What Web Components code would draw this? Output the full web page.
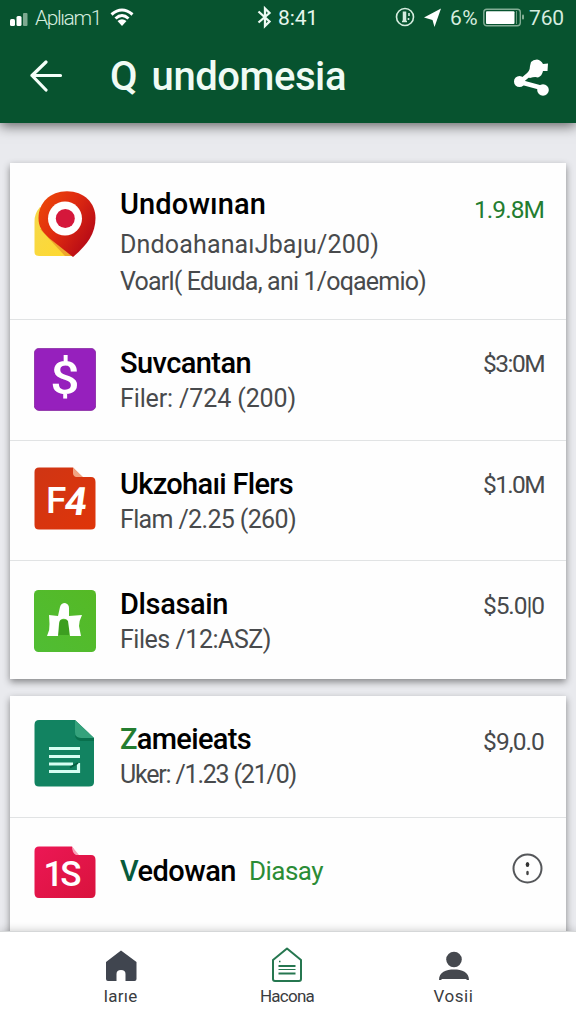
<!DOCTYPE html>
<html lang="en">
<head>
<meta charset="utf-8">
<title>Undomesia</title>
<style>
html,body{margin:0;height:100%;overflow:hidden;background:#e9eaee}
body{font-family:Roboto,"Liberation Sans",sans-serif;color:#000}
</style>
</head>
<body>
<phone-app></phone-app>
<script>
const define = (name, html, ready) => customElements.define(name, class extends HTMLElement {
  connectedCallback() {
    if (!this.shadowRoot) this.attachShadow({mode: 'open'}).innerHTML = html;
    if (ready) ready.call(this, this.shadowRoot);
  }
});

// One line of text tracked so that it fills the width given in its attribute.
define('fit-text', `<style>:host{display:block;white-space:pre;flex:none}span{display:inline-block}</style><span><slot></slot></span>`, function (root) {
  const span = root.querySelector('span');
  const want = +this.getAttribute('width');
  const n = [...this.textContent].length;
  const gap = (want - span.getBoundingClientRect().width) / n;
  span.style.letterSpacing = gap.toFixed(3) + 'px';
  this.style.width = want + 'px';
});

define('status-bar', `<style>
:host{display:flex;align-items:center;height:36px;box-sizing:border-box;padding-left:10px;color:#d5ecdf;font-size:21px;line-height:36px}
svg{display:block;flex:none}
.a{margin-left:7px;font-weight:300}.w{margin-left:9px}.b{margin-left:123px}.t{margin-left:6px;color:#e6f6ed}
.o{margin-left:77px}.l{margin-left:9px}.p{margin-left:8px}.bt{margin-left:5px}.n{margin-left:5px}
</style>
<svg width="18" height="36"><rect x="0" y="19" width="5" height="7" rx="1.5" fill="#fff"/><rect x="6.500" y="16" width="5" height="10" rx="1.500" fill="#fff"/><rect x="13" y="13" width="4.500" height="13" rx="1" fill="#7da990"/></svg>
<fit-text class="a" width="66">Aplıam1</fit-text>
<svg class="w" width="24" height="36" fill="none" stroke="#fff" stroke-width="3"><path d="M1.500 14.500Q12 5.500 22.500 14.500M5.500 18.500Q12 12.500 18.500 18.500" /><path d="M7.500 21Q12 17.500 16.500 21L12 26Z" fill="#fff" stroke="none"/></svg>
<svg class="b" width="15" height="36" fill="none" stroke="#eefaf3" stroke-width="2.300"><path d="M1.500 11.500L12.500 21.500L8 26V8.500L12.500 13L1.500 22.500"/></svg>
<fit-text class="t" width="40">8:41</fit-text>
<svg class="o" width="20" height="36" fill="none" stroke="#d5ecdf" stroke-width="1.600"><circle cx="10" cy="17" r="8.500"/><path d="M9.500 11.500V22" stroke-width="3.500"/><path d="M7 21.500H12M14 13V16M13.500 18V20"/></svg>
<svg class="l" width="18" height="36"><path d="M17 8.500L10.500 27L8.500 20L0 17.500Z" fill="#fff"/></svg>
<fit-text class="p" width="28">6%</fit-text>
<svg class="bt" width="41" height="36"><rect x=".8" y="9.300" width="36.500" height="16.500" rx="3" fill="none" stroke="#83ad95" stroke-width="1.400"/><rect x="3" y="11.300" width="28.500" height="12.700" rx="1" fill="#fff"/><path d="M33.500 11V24" stroke="#6d9b80"/><rect x="39" y="14.500" width="2" height="5" rx="1" fill="#83ad95"/></svg>
<fit-text class="n" width="35">760</fit-text>`);

define('top-bar', `<style>
:host{display:block;height:123px;box-sizing:border-box;background:#07532f;position:relative;z-index:1;box-shadow:0 3px 12px rgba(0,0,0,.58)}
.m{display:flex;align-items:center;height:82px;padding-left:29px}
svg{display:block;flex:none}fit-text{margin-left:47px;font-size:40px;font-weight:500;color:#f0fbf5;line-height:80px;word-spacing:5px}
.s{margin-left:166px}
</style><status-bar></status-bar>
<div class="m">
<svg width="34" height="34" fill="none" stroke="#f4fff9" stroke-width="3.200" stroke-linecap="round" stroke-linejoin="round"><path d="M31.500 15.500H3M17 2L3 15.500L17 30"/></svg>
<fit-text width="236">Q undomesia</fit-text>
<svg class="s" width="38" height="42" fill="#fff"><path d="M21 15L8 26L30 32" fill="none" stroke="#fff" stroke-width="4.500" stroke-linejoin="round"/><circle cx="7.500" cy="25.500" r="5.500"/><circle cx="31" cy="34" r="5.800"/><path d="M19 6Q21 3.500 25 3.500Q29 4 31 8L36 7.500L35.500 15L31 15Q30 20 26 21.500Q23 20.500 18 22L13 20Q18 15 18 10Z"/></svg>
</div>`);

const icons = {
pin: `<svg width="62" height="68"><defs><linearGradient id="r" x1="0" y1="0" x2="1" y2=".7"><stop offset="0" stop-color="#ee4b08"/><stop offset=".5" stop-color="#df2b10"/><stop offset="1" stop-color="#b40817"/></linearGradient><linearGradient id="y" x2="1" y2="1"><stop stop-color="#f5d84c"/><stop offset="1" stop-color="#ffd92d"/></linearGradient></defs><path d="M6 16Q0 23 .5 31V61Q.5 65 5 65H39V45Z" fill="url(#y)"/><path d="M6 38L31 65H39L15 38Z" fill="#eda72c"/><path d="M33 .3C16 .3 4.500 12 4.500 27C4.500 36 8 40 15 47L39 66C53 54 61.500 43 61.500 27C61.500 12 50 .3 33 .3Z" fill="url(#r)"/><circle cx="31" cy="27.500" r="17" fill="#fff"/><circle cx="31.300" cy="27.500" r="9.500" fill="#d5173b"/></svg>`,
dollar: `<svg width="62" height="63"><rect x=".4" y=".4" width="61.200" height="62" rx="4.500" fill="#9620bd" stroke="#81219d" stroke-width=".8"/><text transform="translate(31 46) scale(1.120 1)" text-anchor="middle" font-size="46" font-weight="500" fill="#fff">$</text></svg>`,
f4: `<svg width="62" height="64"><defs><linearGradient id="o" y2="1"><stop stop-color="#cf3514"/><stop offset="1" stop-color="#df3509"/></linearGradient></defs><path d="M5 .5H39L48 10H57Q61.500 10 61.500 15V58Q61.500 62.500 57 62.500H5Q.5 62.500 .5 58V5Q.5 .5 5 .5Z" fill="url(#o)"/><path d="M39 .5L49 10H42Q39 9 39 6Z" fill="#f1a482"/><text x="12" y="45.500" font-size="37" font-weight="500" fill="#fff">F</text><text transform="translate(29 48) skewX(-8)" font-size="39" font-weight="700" fill="#fff">4</text></svg>`,
castle: `<svg width="62" height="63"><defs><linearGradient id="g" x1="1" x2="0" y2="1"><stop stop-color="#55b925"/><stop offset="1" stop-color="#50bd34"/></linearGradient></defs><rect width="62" height="62" rx="4.500" fill="url(#g)"/><path d="M26 30H35V45H24Z" fill="#3d9e20"/><path d="M15 25L24 26L26 17Q27 13 31 13Q35 14 35 18V26L48 25Q45 31 45 36L47 46H36L34 31Q32 28 28 29Q25 30 25 34L24 46H13Q16 40 15.500 34Z" fill="#fff"/></svg>`,
sheet: `<svg width="62" height="68"><path d="M5 0H41L60 18V62Q60 66.500 55 66.500H5Q.5 66.500 .5 62V5Q.5 0 5 0Z" fill="#128361"/><path d="M41 0L60 18H47Q41 18 41 12Z" fill="#35a27c"/><path d="M41 15Q43 18 47 18H60V21H46Q41 19 41 15Z" fill="#08704d"/><path d="M15 28.500H46M15 36.500H46M15 44H39M15 51.500H46M44.500 43V53" stroke="#d6fff2" stroke-width="3.200" fill="none"/><path d="M36 47.500L44 43" stroke="#075f42" stroke-width="2"/></svg>`,
folder: `<svg width="62" height="54"><defs><linearGradient id="k" x2="1" y2="1"><stop stop-color="#ec1755"/><stop offset="1" stop-color="#d9133d"/></linearGradient></defs><path d="M5 .5H38L43 9H57Q61.500 9 61.500 14V47Q61.500 52 57 52H5Q.5 52 .5 47V5Q.5 .5 5 .5Z" fill="url(#k)"/><path d="M38 .5L45 9H42Q38 7 38 .5Z" fill="#f7a0b7"/><text x="9.500" y="40" font-size="35" font-weight="500" fill="#fff" textLength="38">1S</text></svg>`
};

define('file-row', `<style>
:host{display:flex;box-sizing:border-box;padding-left:24px;padding-right:22px;align-items:flex-start;border-bottom:1px solid #e1e3e4}
:host(:last-child){border-bottom:0}
.ic{width:62px;flex:none;margin-top:var(--icon)}svg{display:block}.ic text{font-family:Roboto,sans-serif}
.tx{margin-left:24px;margin-top:var(--title,26px);flex:1;min-width:0}
.h{display:flex;font-size:29px;line-height:34px;font-weight:500;height:34px}
.s{font-size:25px;line-height:37px;color:#484a4c;margin-top:var(--gap,0px)}
.pr{margin-top:var(--price,26px);font-size:24.5px;line-height:36px;color:#47494b}
</style><div class="ic"></div><div class="tx"><div class="h"><slot></slot></div><div class="s"><slot name="sub"></slot></div></div><div class="pr"><slot name="end"></slot></div>`,
function (root) { root.querySelector('.ic').innerHTML = icons[this.getAttribute('icon')]; });

define('file-card', `<style>:host{display:block;background:#fefefe;box-shadow:0 3px 7px rgba(0,0,0,.43)}</style><slot></slot>`);

define('nav-item', `<style>:host{display:flex;flex-direction:column;align-items:center;font-size:17px;line-height:20px;color:#3a3c40}slot[name=icon]{display:block;height:39px}</style><slot name="icon"></slot><slot></slot>`);

define('bottom-nav', `<style>
:host{display:flex;height:93px;box-sizing:border-box;padding:15px 0 0 37px;background:#fff;border-top:1px solid #d5d7d8;box-shadow:0 -1px 8px rgba(0,0,0,.18);position:relative;z-index:1}
svg{display:block;height:40px}
</style>
<nav-item style="width:167px"><svg slot="icon" width="34" viewBox="0 0 34 40"><path d="M17 3.500L32.500 15V32Q32.500 34 30.500 34H21.500V27Q21.500 23 17 23Q12.500 23 12.500 27V34H4Q2 34 2 32V15Z" fill="#40454f"/></svg><fit-text width="34">Iarıe</fit-text></nav-item>
<nav-item style="width:166px"><svg slot="icon" width="34" viewBox="0 0 34 40" fill="none" stroke="#267750" stroke-width="2"><path d="M17 1.500L31 13V32Q31 34 29 34H5Q3 34 3 32V13Z" stroke-linejoin="round"/><path d="M8.500 19H25.500M8.500 26.500H25.500"/><path d="M8.500 22.500H25.500" stroke-width="1"/><path d="M9 14.500H10.500" stroke-width="1.500"/></svg><fit-text width="54">Hacona</fit-text></nav-item>
<nav-item style="width:167px"><svg slot="icon" width="34" viewBox="0 0 34 40" fill="#45484e"><circle cx="17" cy="12.500" r="7.800"/><path d="M2 33C2 25 9 22.500 17 22.500S32 25 32 33H30L29 32H5L4 33Z"/></svg><fit-text width="40">Vosii</fit-text></nav-item>`);

define('phone-app', `<style>
:host{display:flex;flex-direction:column;width:576px;height:1024px;background:#e9eaee;overflow:hidden}
main{flex:1;min-height:0;overflow:hidden;display:flex;flex-direction:column;gap:17px;padding:40px 10px 0;box-sizing:border-box}
file-card{flex:none}
.g{color:#247d30}.d{color:#075a3c}
.day{font-size:26px;font-weight:400;color:#2b8c36;margin-left:13px}
</style>
<top-bar></top-bar>
<main>
<file-card>
<file-row icon="pin" style="height:157px;--icon:28px;--title:24px;--gap:5px;--price:29px"><fit-text width="146">Undowınan</fit-text><fit-text slot="sub" width="259">DndoahanaıJbaȷu/200)</fit-text><fit-text slot="sub" width="306">Voarl( Eduıda, ani 1/oqaemio)</fit-text><fit-text slot="end" class="g" width="70">1.9.8M</fit-text></file-row>
<file-row icon="dollar" style="height:121px;--icon:28px"><fit-text width="131">Suvcantan</fit-text><fit-text slot="sub" width="176">Filer: /724 (200)</fit-text><fit-text slot="end" width="61">$3:0M</fit-text></file-row>
<file-row icon="f4" style="height:120px;--icon:26px"><fit-text width="173">Ukzohaıi Flers</fit-text><fit-text slot="sub" width="176">Flam /2.25 (260)</fit-text><fit-text slot="end" width="61">$1.0M</fit-text></file-row>
<file-row icon="castle" style="height:118px;--icon:29px;--title:26px;--gap:0px;--price:27px"><fit-text width="108">Dlsasain</fit-text><fit-text slot="sub" width="151">Files /12:ASZ)</fit-text><fit-text slot="end" width="61">$5.0|0</fit-text></file-row>
</file-card>
<file-card>
<file-row icon="sheet" style="height:122px;--icon:24px;--gap:0px;--price:28px"><fit-text width="131"><span class="g">Z</span>ameieats</fit-text><fit-text slot="sub" width="176">Uker: /1.23 (21/0)</fit-text><fit-text slot="end" width="61">$9,0.0</fit-text></file-row>
<file-row icon="folder" style="height:130px;--icon:28px;--title:36px;--price:35px"><fit-text width="116"><span class="d">V</span>edowan</fit-text><fit-text class="day" width="74">Diasay</fit-text><svg slot="end" width="32" height="34" fill="none" stroke="#55575a" stroke-width="2"><circle cx="15.500" cy="15.500" r="14"/><ellipse cx="15.500" cy="11.500" rx="1.800" ry="2.600" fill="#333" stroke="none"/><ellipse cx="15.500" cy="20" rx="1.300" ry="2.200" fill="#444" stroke="none"/></svg></file-row>
</file-card>
</main>
<bottom-nav></bottom-nav>`);
</script>
</body>
</html>
